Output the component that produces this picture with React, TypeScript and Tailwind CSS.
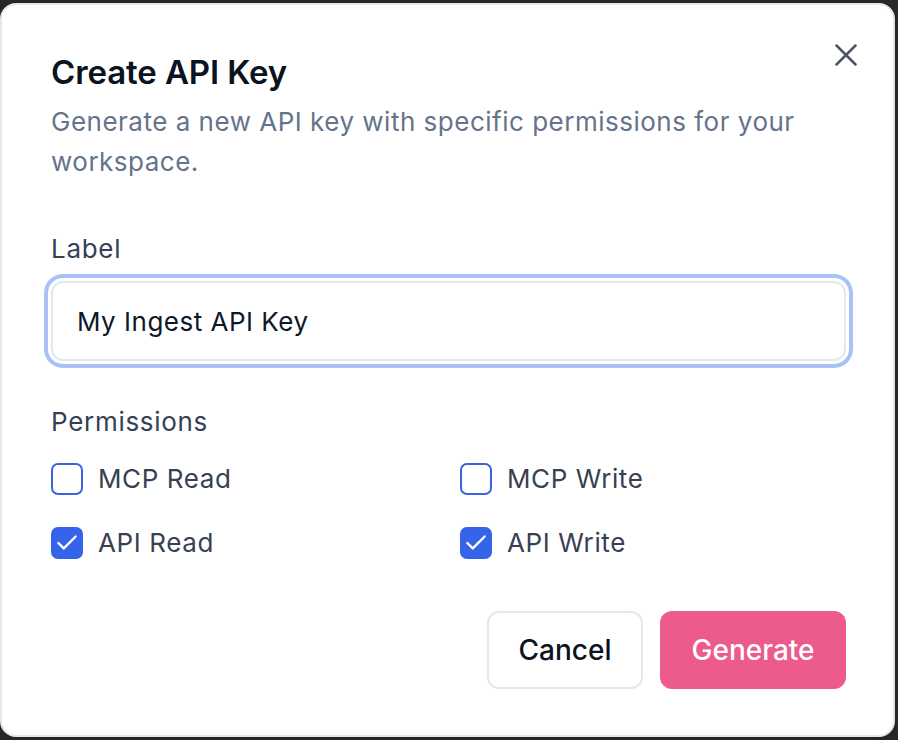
import { useState } from 'react';
import { X, Check } from 'lucide-react';

const perms = [
  { id: 'mcp-read', label: 'MCP Read', checked: false },
  { id: 'mcp-write', label: 'MCP Write', checked: false },
  { id: 'api-read', label: 'API Read', checked: true },
  { id: 'api-write', label: 'API Write', checked: true },
];

export default function App() {
  const [label, setLabel] = useState('My Ingest API Key');
  const [checked, setChecked] = useState<Record<string, boolean>>(
    Object.fromEntries(perms.map((p) => [p.id, p.checked]))
  );

  return (
    <div
      className="h-[740px] w-[898px] bg-[#272727] pt-[3px] pr-[3px]"
      style={{ fontFamily: 'Inter, "Noto Sans", sans-serif' }}
    >
      <div className="relative h-[734px] w-[895px] rounded-[16px] border-2 border-[#e2e8f0] bg-white pl-[49px] pr-[47px] pt-[50px]">
        <button className="absolute right-[28px] top-[31px] text-[#4b5563]">
          <X size={38} strokeWidth={1.6} />
        </button>

        <h2 className="text-[33px] font-semibold leading-[34px] tracking-[-0.1px] text-[#0b1220]">
          Create API Key
        </h2>
        <p className="mt-[13px] text-[26px] leading-[40px] tracking-[0.5px] text-[#64748b]">
          Generate a new API key with specific permissions for your workspace.
        </p>

        <div className="mt-[49px] text-[26px] leading-[36px] tracking-[0.7px] text-[#334155]">Label</div>
        <input
          value={label}
          onChange={(e) => setLabel(e.target.value)}
          className="mt-[14px] h-[80px] w-full rounded-[12px] border-2 border-[#e2e8f0] bg-white px-[24px] text-[26px] tracking-[0.5px] text-[#0f172a] outline-none shadow-[0_0_0_3px_#ffffff,0_0_0_7px_#a9c2f5]"
        />

        <div className="mt-[43px] text-[26px] leading-[36px] tracking-[0.7px] text-[#334155]">Permissions</div>
        <div className="mt-[23px] grid grid-cols-2 gap-x-[23px] gap-y-[32px]">
          {perms.map((p) => {
            const on = checked[p.id];
            return (
              <label key={p.id} className="flex cursor-pointer items-center gap-[15px]">
                <button
                  type="button"
                  onClick={() => setChecked({ ...checked, [p.id]: !on })}
                  className={`flex h-[32px] w-[32px] items-center justify-center rounded-[7px] border-2 ${
                    on ? 'border-[#3563e9] bg-[#3563e9]' : 'border-[#3b63e0] bg-white'
                  }`}
                >
                  {on && <Check size={26} strokeWidth={2.2} className="text-white" />}
                </button>
                <span className="text-[26px] leading-[32px] tracking-[0.6px] text-[#374151]">{p.label}</span>
              </label>
            );
          })}
        </div>

        <div className="mt-[52px] flex justify-end gap-[17px]">
          <button className="h-[78px] w-[156px] rounded-[12px] border-2 border-[#e2e8f0] bg-white text-[28px] font-medium text-[#0b1220]">
            Cancel
          </button>
          <button className="h-[78px] w-[186px] rounded-[12px] bg-[#ec5b8b] text-[28px] font-medium text-white">
            Generate
          </button>
        </div>
      </div>
    </div>
  );
}
